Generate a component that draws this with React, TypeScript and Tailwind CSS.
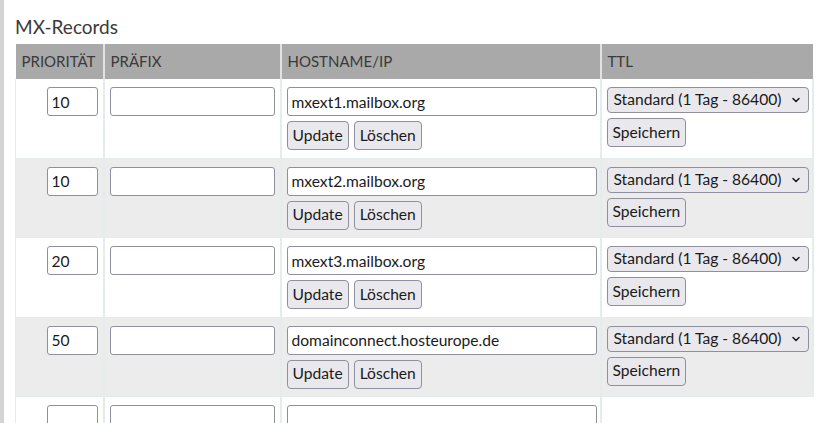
import { ChevronDown } from "lucide-react"

const records = [
  { prio: "10", host: "mxext1.mailbox.org" },
  { prio: "10", host: "mxext2.mailbox.org" },
  { prio: "20", host: "mxext3.mailbox.org" },
  { prio: "50", host: "domainconnect.hosteurope.de" },
]

const btn =
  "h-[29px] px-[5px] bg-[#e9e9ed] border border-[#8f8f9d] rounded-[4px] text-[15.6px] text-[#1a1a1a] leading-none"
const input =
  "h-[29px] border border-[#8f8f9d] rounded-[3px] bg-white px-[4px] text-[15.6px] text-[#1a1a1a] outline-none"

function TtlSelect() {
  return (
    <div className="flex items-center justify-between w-[202px] h-[26px] pl-[6px] pr-[6px] bg-[#e9e9ed] border border-[#8f8f9d] rounded-[4px] text-[15.6px] text-[#1a1a1a]">
      <span>Standard (1 Tag - 86400)</span>
      <ChevronDown className="h-[12px] w-[12px]" strokeWidth={3} />
    </div>
  )
}

export default function App() {
  return (
    <div
      className="flex h-[423px] w-[837px] overflow-hidden bg-white text-[#333]"
      style={{ fontFamily: "Lato, 'Open Sans', sans-serif" }}
    >
      <div className="w-[4px] shrink-0 bg-[#d4d4d4]" />
      <div className="pl-[11px] pt-[13px]">
        <h2 className="text-[19px] leading-[28px] text-[#3a3a3a] mb-[3px]">MX-Records</h2>
        <table className="w-[797px] border-collapse table-fixed">
          <colgroup>
            <col className="w-[88px]" />
            <col className="w-[177px]" />
            <col className="w-[320px]" />
            <col className="w-[212px]" />
          </colgroup>
          <thead>
            <tr className="bg-[#a9a9a9] h-[35px] text-[15px] text-[#3a3a3a] uppercase text-left">
              <th className="font-normal px-[6px] border-r-2 border-[#e2e2e2]">Priorität</th>
              <th className="font-normal px-[6px] border-r-2 border-[#e2e2e2]">Präfix</th>
              <th className="font-normal px-[6px] border-r-2 border-[#e2e2e2]">Hostname/IP</th>
              <th className="font-normal px-[6px]">TTL</th>
            </tr>
          </thead>
          <tbody>
            {records.map((r, i) => (
              <tr key={i} className={i % 2 === 1 ? "bg-[#ececec]" : "bg-white"}>
                <td className="align-top pt-[8px] pb-[7.5px] pr-[5px] border-l border-r-2 border-b border-[#e6ecec] text-right">
                  <input className={input + " w-[51px]"} defaultValue={r.prio} />
                </td>
                <td className="align-top pt-[8px] px-[5px] border-r-2 border-b border-[#e6ecec]">
                  <input className={input + " w-[165px]"} defaultValue="" />
                </td>
                <td className="align-top pt-[8px] pb-[7.5px] px-[5px] border-r-2 border-b border-[#e6ecec]">
                  <input className={input + " w-[310px]"} defaultValue={r.host} />
                  <div className="flex gap-[5px] mt-[5px]">
                    <button className={btn}>Update</button>
                    <button className={btn}>Löschen</button>
                  </div>
                </td>
                <td className="align-top pt-[8px] px-[5px] border-r-2 border-b border-[#e6ecec]">
                  <TtlSelect />
                  <button className={btn + " mt-[5px]"}>Speichern</button>
                </td>
              </tr>
            ))}
            <tr className="bg-white">
              <td className="align-top pt-[8px] pr-[5px] border-l border-r-2 border-[#e6ecec] text-right">
                <input className={input + " w-[51px]"} defaultValue="" />
              </td>
              <td className="align-top pt-[8px] px-[5px] border-r-2 border-[#e6ecec]">
                <input className={input + " w-[165px]"} defaultValue="" />
              </td>
              <td className="align-top pt-[8px] px-[5px] border-r-2 border-[#e6ecec]">
                <input className={input + " w-[310px]"} defaultValue="" />
              </td>
              <td />
            </tr>
          </tbody>
        </table>
      </div>
    </div>
  )
}
